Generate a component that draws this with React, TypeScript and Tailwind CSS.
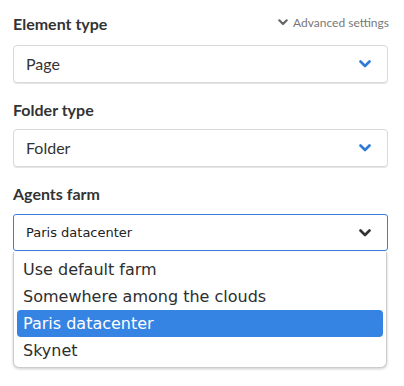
import React from "react";

const Chevron = ({ color }: { color: string }) => (
  <svg width="12" height="8" viewBox="0 0 12 8" fill="none">
    <path d="M1.5 1.5 L6 6 L10.5 1.5" stroke={color} strokeWidth="2.6" strokeLinecap="round" strokeLinejoin="round" />
  </svg>
);

const Label = ({ children }: { children: React.ReactNode }) => (
  <div className="text-[16px] font-bold text-[#333] leading-[20px]">{children}</div>
);

export default function App() {
  const items = ["Use default farm", "Somewhere among the clouds", "Paris datacenter", "Skynet"];
  return (
    <div className="w-[404px] h-[386px] bg-white px-[13px] pt-[14px] [font-family:Lato,'Open_Sans',sans-serif]">
      <div className="flex items-center justify-between w-[376px]">
        <Label>Element type</Label>
        <div className="flex items-center gap-[5px] text-[12px] text-[#777] -mt-[3px]">
          <svg width="10" height="7" viewBox="0 0 10 7"><path d="M1.3 1.3 L5 5 L8.7 1.3" stroke="#666" strokeWidth="2.2" fill="none" strokeLinecap="round" strokeLinejoin="round" /></svg>
          <span>Advanced settings</span>
        </div>
      </div>
      <div className="mt-[11px] w-[375px] h-[38px] border border-[#d9d9d9] rounded-[4px] flex items-center justify-between pl-[12px] pr-[16px] shadow-[0_1px_0_#e5e5e5]">
        <span className="text-[16px] text-[#333]">Page</span>
        <Chevron color="#2f7ad8" />
      </div>
      <div className="mt-[17px]"><Label>Folder type</Label></div>
      <div className="mt-[9px] w-[375px] h-[38px] border border-[#d9d9d9] rounded-[4px] flex items-center justify-between pl-[12px] pr-[16px] shadow-[0_1px_0_#e5e5e5]">
        <span className="text-[16px] text-[#333]">Folder</span>
        <Chevron color="#2f7ad8" />
      </div>
      <div className="mt-[17px]"><Label>Agents farm</Label></div>
      <div className="relative mt-[10px] w-[375px]">
        <div className="h-[37px] border border-[#3b7ddd] rounded-[3px] flex items-center justify-between pl-[12px] pr-[16px]">
          <span className="text-[13px] text-[#222] [font-family:'DejaVu_Sans',sans-serif]">Paris datacenter</span>
          <Chevron color="#333" />
        </div>
        <div className="absolute left-0 top-[38px] w-[374px] bg-white border border-[#ccc] border-t-0 rounded-b-[6px] shadow-[0_1px_3px_rgba(0,0,0,0.2)] px-[3px] pt-[4px] pb-[3px] [font-family:'DejaVu_Sans',sans-serif]">
          {items.map((it) => (
            <div
              key={it}
              className={
                "h-[27px] flex items-center pl-[6px] text-[16px] rounded-[4px] " +
                (it === "Paris datacenter" ? "bg-[#3584e4] text-white" : "text-[#2e2e2e]")
              }
            >
              {it}
            </div>
          ))}
        </div>
      </div>
    </div>
  );
}
